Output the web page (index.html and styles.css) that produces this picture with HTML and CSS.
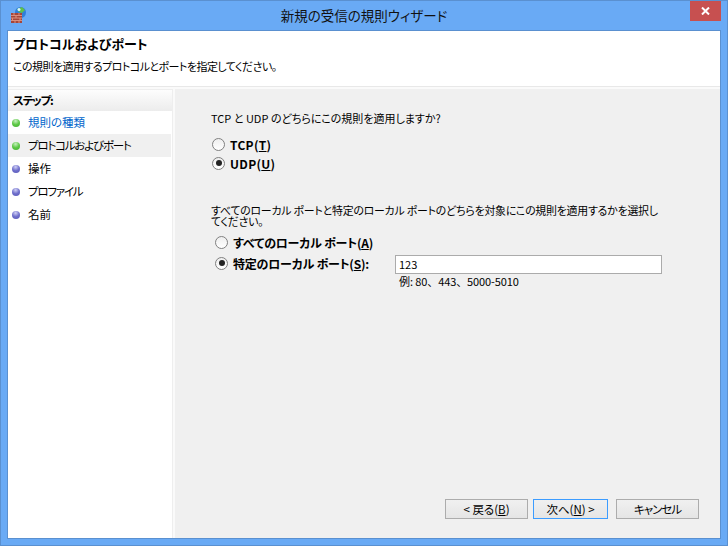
FILE: index.html
```html
<!DOCTYPE html>
<html lang="ja">
<head>
<meta charset="utf-8">
<title>新規の受信の規則ウィザード</title>
<link rel="stylesheet" href="styles.css">
</head>
<body>
<div class="window">
  <div class="titlebar">
    <svg class="app-icon" width="16" height="16" viewBox="0 0 16 16">
      <circle cx="9.500" cy="5.500" r="5.500" fill="#2f7fd8"/>
      <path d="M6 2l5-2 3 3-3 3-3-1z" fill="#5fc04a"/>
      <circle cx="8" cy="2.500" r="1.500" fill="#d8f2ff"/>
      <rect x="0" y="6" width="11" height="10" fill="#a5463a"/>
      <path d="M0 8.500h11M0 11h11M0 13.500h11M3 6v2.500M8 6v2.500M5 8.500V11M1.500 11v2.500M9 11v2.500M4 13.500V16M8 13.500V16" stroke="#d98f7f" stroke-width="1" fill="none"/>
    </svg>
    <div class="title">新規の受信の規則ウィザード</div>
    <div class="close">
      <svg width="9" height="8" viewBox="0 0 9 8"><path d="M1 0.500L8 7.500M8 0.500L1 7.500" stroke="#fff" stroke-width="2" fill="none"/></svg>
    </div>
  </div>
  <div class="client">
    <header class="head">
      <h1 class="head-title">プロトコルおよびポート</h1>
      <p class="head-sub">この規則を適用するプロトコルとポートを指定してください。</p>
    </header>
    <div class="body">
      <nav class="steps">
        <div class="steps-title">ステップ:</div>
        <ul class="step-list">
          <li class="step link"><span class="dot green"></span>規則の種類</li>
          <li class="step current kana"><span class="dot green"></span>プロトコルおよびポート</li>
          <li class="step"><span class="dot blue"></span>操作</li>
          <li class="step kana"><span class="dot blue"></span>プロファイル</li>
          <li class="step"><span class="dot blue"></span>名前</li>
        </ul>
      </nav>
      <main class="panel">
        <div class="content">
          <p class="q1">TCP と UDP のどちらにこの規則を適用しますか?</p>
          <div class="radio-group proto">
            <div class="radio"><span class="rb"></span><b>TCP(<u>T</u>)</b></div>
            <div class="radio"><span class="rb on"></span><b>UDP(<u>U</u>)</b></div>
          </div>
          <p class="q2">すべてのローカル ポートと特定のローカル ポートのどちらを対象にこの規則を適用するかを選択してください。</p>
          <div class="radio-group ports">
            <div class="radio"><span class="rb"></span><b>すべてのローカル ポート(<u>A</u>)</b></div>
            <div class="radio port-row">
              <span class="rb on"></span><b class="port-label">特定のローカル ポート(<u>S</u>):</b>
              <div class="input">123</div>
            </div>
            <div class="hint">例: 80、443、5000-5010</div>
          </div>
        </div>
        <div class="buttons">
          <div class="btn">&lt; 戻る(<u>B</u>)</div>
          <div class="btn primary">次へ(<u>N</u>) &gt;</div>
          <div class="btn cancel">キャンセル</div>
        </div>
      </main>
    </div>
  </div>
</div>
</body>
</html>
```
FILE: styles.css
```css
* { box-sizing: border-box; }
html, body { margin: 0; padding: 0; }
body {
  width: 728px;
  height: 546px;
  overflow: hidden;
  font-family: "Noto Sans CJK JP", "Noto Sans", sans-serif;
  font-size: 11.5px;
  font-feature-settings: "palt";
  color: #000;
}
.window {
  width: 728px;
  height: 546px;
  background: #69aaf5;
  border: 1px solid #5a90d0;
  display: flex;
  flex-direction: column;
  padding: 0 6px 6px;
}
.titlebar {
  height: 29px;
  flex: none;
  position: relative;
}
.app-icon { position: absolute; left: 4px; top: 6px; }
.title {
  text-align: center;
  font-size: 13.500px;
  line-height: 28px;
  color: #111;
}
.close {
  position: absolute;
  right: 0;
  top: 0;
  width: 31px;
  height: 20px;
  background: #c75050;
  display: flex;
  align-items: center;
  justify-content: center;
}
.client {
  flex: 1;
  border: 1px solid #5a90d0;
  background: #f0f0f0;
  display: flex;
  flex-direction: column;
  min-height: 0;
}
.head {
  height: 56px;
  flex: none;
  background: #fff;
  padding: 4px 5px 0;
  border-bottom: 1px solid #e8e8e8;
}
.head-title { margin: 0; font-size: 13px; font-weight: 700; line-height: 18px; }
.head-sub { margin: 5px 0 0; font-size: 11px; line-height: 16px; letter-spacing: -0.55px; }
.body { flex: 1; display: flex; min-height: 0; padding-top: 2px; background: #fafafa; }
.steps {
  width: 165px;
  flex: none;
  background: #fff;
  border-top: 1px solid #eee;
  border-right: 1px solid #eee;
}
.steps-title {
  height: 21px;
  padding-left: 5px;
  font-weight: 700;
  line-height: 20px;
  letter-spacing: -1.2px;
  background: linear-gradient(#fdfdfd, #ececec);
}
.step-list { list-style: none; margin: 0; padding: 0; }
.step {
  height: 23px;
  margin-right: 1px;
  padding: 0 0 2px 4px;
  display: flex;
  align-items: center;
  gap: 8px;
}
.step.kana { letter-spacing: -1.2px; }
.step.link { color: #0066cc; }
.step.current { background: #f0f0f0; }
.dot { width: 8px; height: 8px; margin-top: 2px; border-radius: 50%; flex: none; }
.dot.green { background: radial-gradient(circle at 45% 25%, #c8f0c0 0, #5cc845 50%, #46b035 100%); }
.dot.blue { background: radial-gradient(circle at 45% 25%, #d0d0f5 0, #6e6ecb 50%, #5a5ab8 100%); }
.panel {
  flex: 1;
  margin-left: 2px;
  background: #f0f0f0;
  display: flex;
  flex-direction: column;
  justify-content: space-between;
  min-width: 0;
}
.content { padding: 21px 58px 0 36px; }
.q1 { margin: 0; font-size: 11px; line-height: 16px; }
.radio-group { display: flex; flex-direction: column; }
.proto { margin-top: 9px; margin-left: 1px; gap: 1px; }
.proto b { letter-spacing: 0.3px; }
.radio { display: flex; align-items: center; height: 18px; gap: 5px; font-size: 12px; }
.rb {
  width: 13px; height: 13px; border-radius: 50%;
  border: 1px solid #808080;
  background: linear-gradient(#eee, #fff);
  flex: none;
  position: relative;
}
.rb.on::after {
  content: "";
  position: absolute;
  left: 2.500px; top: 2.500px;
  width: 6px; height: 6px; border-radius: 50%;
  background: #222;
}
.q2 { margin: 33px 0 0; font-size: 10.900px; line-height: 11px; letter-spacing: -0.2px; }
.ports { margin-top: 6px; padding-left: 4px; gap: 3px; }
.port-label { width: 157px; }
.ports b { letter-spacing: -0.2px; }
.input {
  width: 267px;
  height: 19px;
  margin-top: 2px;
  flex: none;
  background: #fff;
  border: 1px solid #ababab;
  line-height: 17px;
  padding-left: 3px;
  font-size: 11px;
  font-weight: 400;
}
.hint { margin: -1px 0 0 184px; font-size: 11px; font-feature-settings: normal; line-height: 14px; letter-spacing: -0.1px; white-space: nowrap; }
.buttons { display: flex; justify-content: flex-end; padding: 0 21px 19px 0; gap: 5px; }
.btn {
  width: 83px;
  height: 20px;
  border: 1px solid #acacac;
  background: linear-gradient(#f0f0f0, #e5e5e5);
  text-align: center;
  line-height: 18px;
}
.btn.primary { width: 75px; border-color: #3c9cff; margin-right: 3px; }
.btn.cancel { letter-spacing: -1px; }
```
